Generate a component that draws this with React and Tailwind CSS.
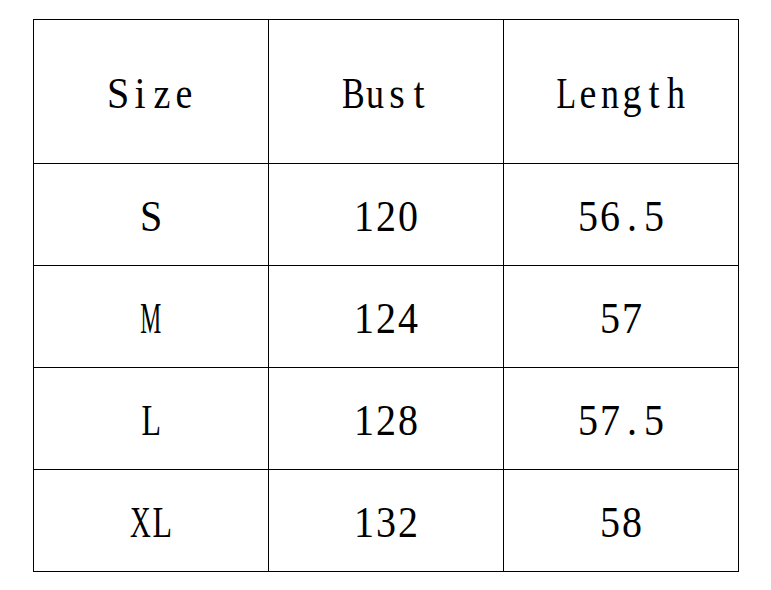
import React from 'react';

const rows = [
  ['S', '120', '56.5'],
  ['M', '124', '57'],
  ['L', '128', '57.5'],
  ['XL', '132', '58'],
];

const headers = ['Size', 'Bust', 'Length'];

// squeeze the wide Times capitals so each glyph fits a half-width cell
const squeeze = {
  M: 'scale-x-[0.59]',
  X: 'scale-x-[0.72]',
  L: 'scale-x-[0.8]',
  B: 'scale-x-[0.85]',
  n: 'scale-x-[0.9]',
  h: 'scale-x-[0.9]',
  u: 'scale-x-[0.9]',
  z: 'scale-x-[0.95]',
  e: 'scale-x-[0.95]',
  g: 'scale-x-[0.95]',
};

const Mono = ({ text }) => (
  <span className="flex">
    {text.split('').map((ch, i) => (
      <span key={i} className="flex justify-center w-[22px]">
        <span className={`inline-block scale-y-[1.12] ${squeeze[ch] || 'scale-x-100'}`}>{ch}</span>
      </span>
    ))}
  </span>
);

export default function App() {
  return (
    <div className="w-[771px] h-[590px] bg-white pl-[33px] pt-[19px] text-black font-['Liberation_Serif',serif] text-[40px] leading-none">
      <div className="grid grid-cols-[235px_235px_235px] w-fit border-l border-t border-black">
        {headers.map((h) => (
          <div
            key={h}
            className="h-[144px] border-r border-b border-black flex items-center justify-center pt-[2px]"
          >
            <Mono text={h} />
          </div>
        ))}
        {rows.map((row, i) =>
          row.map((cell, j) => (
            <div
              key={`${i}-${j}`}
              className="h-[102px] border-r border-b border-black flex items-center justify-center pt-[3px]"
            >
              <Mono text={cell} />
            </div>
          ))
        )}
      </div>
    </div>
  );
}
